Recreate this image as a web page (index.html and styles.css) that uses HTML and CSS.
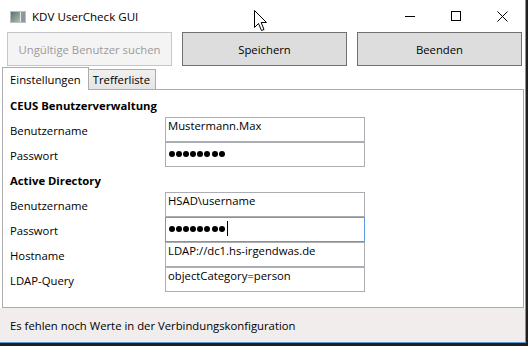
FILE: index.html
```html
<!DOCTYPE html>
<html lang="de">
<head>
    <meta charset="UTF-8">
    <title>KDV UserCheck GUI</title>
    <link rel="stylesheet" href="styles.css">
</head>
<body>

    <div class="window">

        <!-- Titelleiste -->
        <div class="titlebar">
            <svg class="app-icon" width="16" height="12" viewBox="0 0 16 12">
                <defs>
                    <linearGradient id="ig" x1="0" y1="0" x2="1" y2="1">
                        <stop offset="0" stop-color="#5d6f7c"/>
                        <stop offset="1" stop-color="#a9c3a4"/>
                    </linearGradient>
                </defs>
                <rect x="0.5" y="0.5" width="15" height="11" fill="#e4e8ea" stroke="#b9c0c5"/>
                <rect x="1" y="1" width="9" height="10" fill="url(#ig)"/>
                <rect x="11" y="1" width="4" height="10" fill="#8f979c"/>
            </svg>
            <span class="title">KDV UserCheck GUI</span>
            <div class="controls">
                <div class="ctl">
                    <svg width="10" height="10" viewBox="0 0 10 10"><path d="M0 5.5H10" stroke="#000" stroke-width="1"/></svg>
                </div>
                <div class="ctl">
                    <svg width="10" height="10" viewBox="0 0 10 10"><rect x="0.5" y="0.5" width="9" height="9" fill="none" stroke="#000"/></svg>
                </div>
                <div class="ctl">
                    <svg width="11" height="11" viewBox="0 0 11 11"><path d="M0.5 0.5L10.5 10.5M10.5 0.5L0.5 10.5" stroke="#000" stroke-width="1"/></svg>
                </div>
            </div>
        </div>

        <!-- Schaltflächen -->
        <div class="toolbar">
            <button class="btn" disabled>Ungültige Benutzer suchen</button>
            <button class="btn">Speichern</button>
            <button class="btn">Beenden</button>
        </div>

        <!-- Reiter -->
        <div class="tab-strip">
            <div class="tab active">Einstellungen</div>
            <div class="tab">Trefferliste</div>
        </div>

        <div class="tab-panel">
            <div class="form">
                <div class="section first">CEUS Benutzerverwaltung</div>

                <div class="label">Benutzername</div>
                <div class="field">Mustermann.Max</div>

                <div class="label">Passwort</div>
                <div class="field pw">
                    <span class="dot"></span><span class="dot"></span><span class="dot"></span><span class="dot"></span><span class="dot"></span><span class="dot"></span><span class="dot"></span><span class="dot"></span>
                </div>

                <div class="section">Active Directory</div>

                <div class="label">Benutzername</div>
                <div class="field">HSAD\username</div>

                <div class="label">Passwort</div>
                <div class="field pw focus">
                    <span class="dot"></span><span class="dot"></span><span class="dot"></span><span class="dot"></span><span class="dot"></span><span class="dot"></span><span class="dot"></span><span class="dot"></span><span class="caret"></span>
                </div>

                <div class="label">Hostname</div>
                <div class="field">LDAP://dc1.hs-irgendwas.de</div>

                <div class="label">LDAP-Query</div>
                <div class="field">objectCategory=person</div>
            </div>
        </div>

        <!-- Statusleiste -->
        <div class="statusbar">Es fehlen noch Werte in der Verbindungskonfiguration</div>
    </div>

    <!-- Mauszeiger -->
    <svg class="cursor" width="14" height="22" viewBox="0 0 14 22">
        <path d="M0.5 0.5V17.5L4.5 13.5L7.5 20.5L10 19.5L7.2 12.5H12.5Z" fill="#fff" stroke="#000" stroke-width="1" stroke-linejoin="miter"/>
    </svg>

</body>
</html>
```

FILE: styles.css
```css
body {
    margin: 0;
    width: 528px;
    height: 346px;
    overflow: hidden;
    background-color: #1f1f1f;
    font-family: "Open Sans", "Noto Sans", sans-serif;
    font-size: 11.3px;
    color: #000;
    position: relative;
}

.window {
    width: 525px;
    height: 342px;
    background-color: #fff;
    border-top: 1px solid #cdd8e3;
    border-right: 1px solid #5c9bd6;
    border-bottom: 1px solid #5c9bd6;
    display: flex;
    flex-direction: column;
    box-sizing: content-box;
    margin-top: -1px;
}

/* Titelleiste */
.titlebar {
    height: 32px;
    display: flex;
    align-items: center;
}

.app-icon {
    margin-left: 10px;
    margin-top: 1px;
}

.title {
    margin-left: 6px;
    font-size: 11.6px;
}

.controls {
    margin-left: auto;
    display: flex;
}

.ctl {
    width: 46px;
    height: 32px;
    display: flex;
    align-items: center;
    justify-content: center;
}

/* Schaltflächen */
.toolbar {
    display: flex;
    gap: 10px;
    padding: 0 0 1px 7px;
}

.btn {
    width: 165px;
    height: 34px;
    font-family: inherit;
    font-size: 11.3px;
    color: #000;
    background-color: #dddddd;
    border: 1px solid #707070;
    padding: 0;
}

.btn[disabled] {
    background-color: #f4f4f4;
    border-color: #c4c7c9;
    color: #9a9a9a;
}

/* Reiter */
.tab-strip {
    display: flex;
    align-items: flex-end;
    height: 22px;
    padding-left: 2px;
}

.tab {
    height: 20px;
    box-sizing: border-box;
    border: 1px solid #acacac;
    border-bottom: none;
    background: linear-gradient(#f0f0f0, #e5e5e5);
    padding: 0 5px 0 4px;
    line-height: 19px;
    margin-left: -1px;
}

.tab.active {
    height: 23px;
    margin-left: 0;
    margin-bottom: -1px;
    background: #fff;
    padding: 2px 7px 0 7px;
    position: relative;
    z-index: 1;
}

.tab-panel {
    height: 219px;
    box-sizing: border-box;
    margin: 0 1px 0 2px;
    border: 1px solid #acacac;
    padding: 2px 0 0 7px;
}

.form {
    display: grid;
    grid-template-columns: 155px 200px;
    grid-auto-rows: 25px;
}

.section {
    grid-column: 1 / span 2;
    font-weight: bold;
    line-height: 16px;
    padding-top: 6px;
}

.section.first {
    height: 27px;
    box-sizing: border-box;
}

.label {
    line-height: 16px;
    padding-top: 6px;
}

.field {
    height: 25px;
    box-sizing: border-box;
    border: 1px solid #abadb3;
    padding: 0 2px;
    line-height: 16px;
    white-space: nowrap;
}

.field.focus {
    border-color: #569de5;
}

.field.pw {
    display: flex;
    align-items: center;
    gap: 1.1px;
    padding-left: 3px;
    padding-bottom: 2px;
}

.dot {
    width: 6px;
    height: 6px;
    border-radius: 50%;
    background-color: #000;
}

.caret {
    width: 1px;
    height: 15px;
    background-color: #000;
    margin-left: 1px;
}

/* Statusleiste */
.statusbar {
    flex: 1;
    background-color: #f0edec;
    display: flex;
    align-items: center;
    padding-left: 10px;
    padding-top: 1px;
}

.cursor {
    position: absolute;
    left: 254px;
    top: 10px;
}
```
